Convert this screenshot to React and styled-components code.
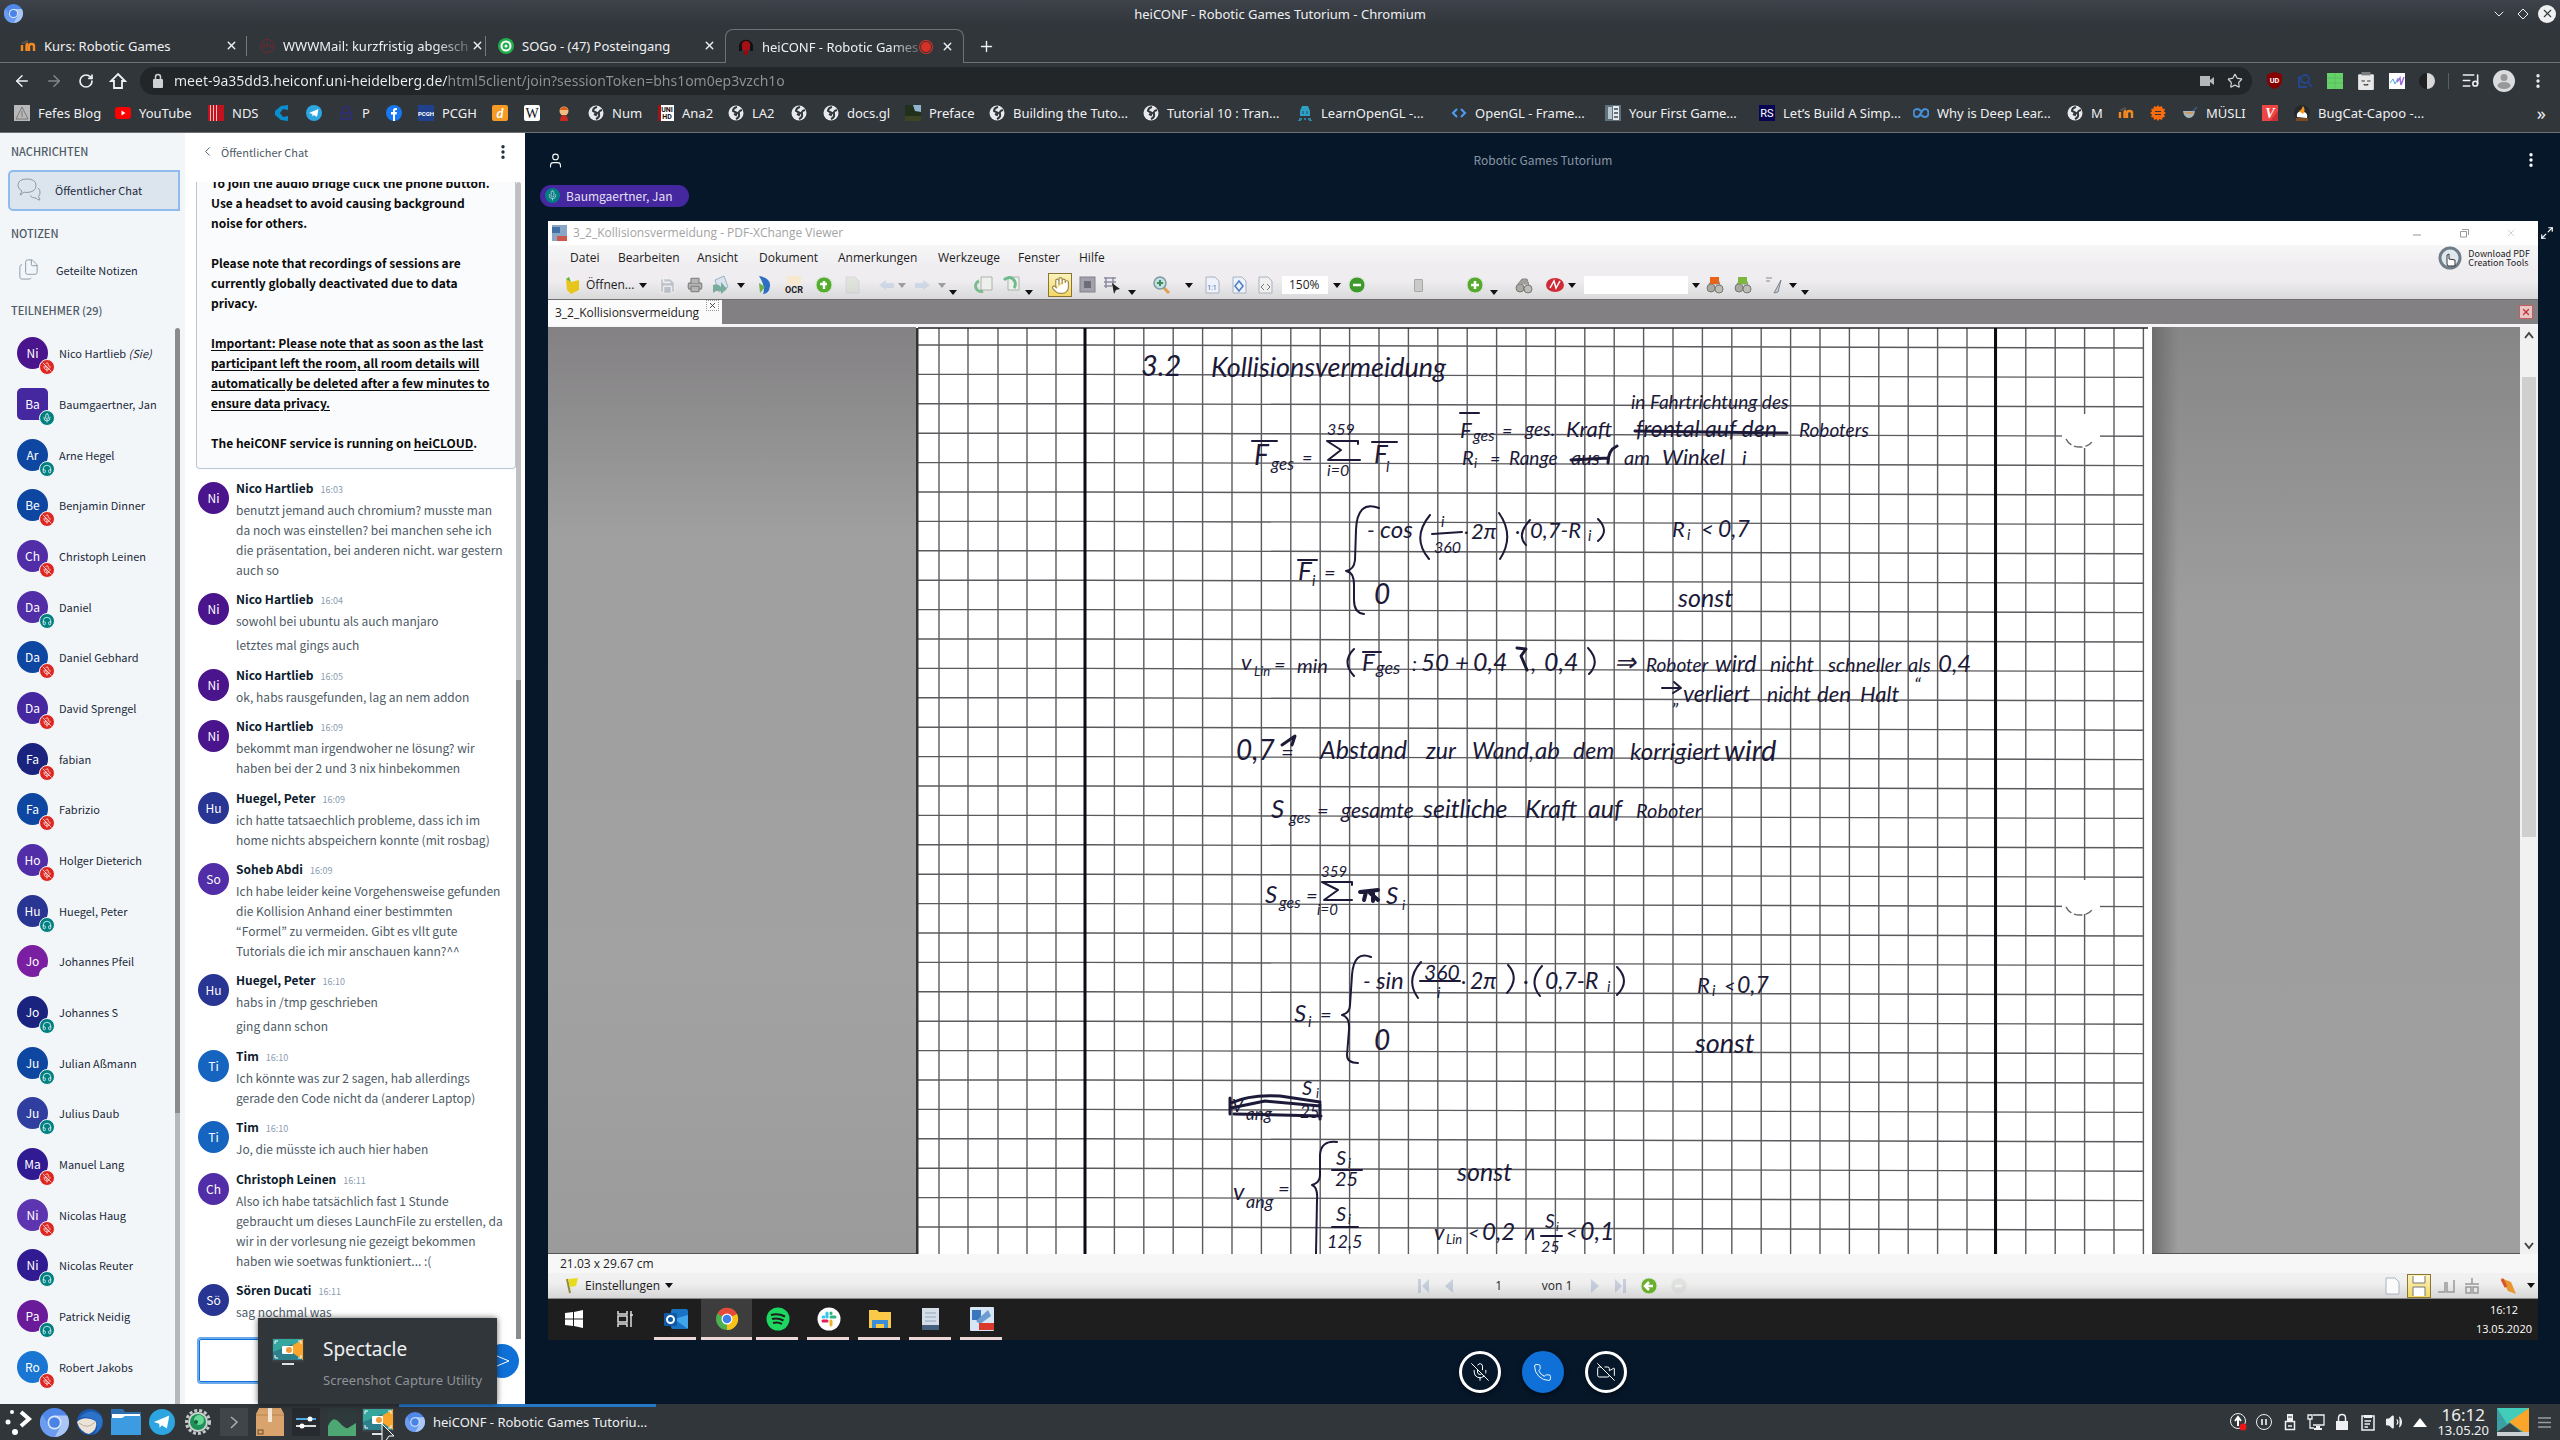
import React from "react";
import styled, { createGlobalStyle, css } from "styled-components";
import {
  ArrowLeft, ArrowRight, RotateCw, House, Lock, Video, Star, ListMusic, EllipsisVertical, ChevronLeft, ChevronDown,
  Mic, MicOff, Headphones, User, Phone, VideoOff, Maximize2, Volume2, Clipboard,
  Files, Plus, X, Hand, Save, Printer, Mail,
} from "lucide-react";

const UI = `"Noto Sans", "Open Sans", sans-serif`;
const BBB = `"Noto Sans CJK KR", "Noto Sans", sans-serif`;
const WIN = `"Open Sans", "Noto Sans", sans-serif`;

const GlobalStyle = createGlobalStyle`
  *, *::before, *::after { box-sizing: border-box; }
  body { margin: 0; background: #06172a; font-family: ${UI}; overflow: hidden; }
  h1, h2, h3, p, ul { margin: 0; padding: 0; font-weight: inherit; font-size: inherit; }
  ul { list-style: none; }
  button, input, select, textarea { font: inherit; color: inherit; }
  button { border: 0; padding: 0; background: none; cursor: pointer; }
  a { color: inherit; text-decoration: none; }
  svg { display: block; flex: none; }
`;

const Desktop = styled.div`
  display: grid;
  grid-template-rows: auto minmax(0, 1fr) auto;
  height: 100vh;
`;

/* ---------- small drawings ---------- */

const Chromium = ({ size = 20 }) => (
  <svg width={size} height={size} viewBox="0 0 20 20">
    <circle cx="10" cy="10" r="10" fill="#5088ea" />
    <path d="M10 5.200 H18.800 A10 10 0 0 1 10 20 L14.200 12.400Z" fill="#a9c6f7" />
    <path d="M1.800 4.300 A10 10 0 0 0 10 20 L14 12.800 L6 12.500Z" fill="#6b9cf0" />
    <circle cx="10" cy="10" r="4.800" fill="#dbe7fc" />
    <circle cx="10" cy="10" r="3.700" fill="#4a83e6" />
  </svg>
);

const MoodleGlyph = () => (
  <>
    <path d="M1 5 L7 2 L9 4 L3 6Z" fill="#5b5150" />
    <path d="M2 13 V7 M6.500 13 V8 Q6.500 6 8 6 M9 13 V8 Q9 6 11.500 6 T14 8 V13" fill="none" stroke="#f28a1f" strokeWidth="2.400" />
  </>
);

const FAVICONS = {
  moodle: <MoodleGlyph />,
  mail: <g fill="none" stroke="#7d2230"><circle cx="8" cy="8" r="6.500" /><path d="M5 6 V10 M8 5 V9 M11 6 V10" /></g>,
  sogo: <><circle cx="8" cy="8" r="8" fill="#1fae4a" /><circle cx="8" cy="8" r="4.500" fill="none" stroke="#fff" strokeWidth="2" /><circle cx="8" cy="8" r="1.500" fill="#fff" /></>,
  headset: <><path d="M2 8 A6 6 0 0 1 14 8" fill="none" stroke="#111" strokeWidth="2.500" /><rect x="4" y="2" width="8" height="10" rx="4" fill="#a80f14" /><rect x="1" y="7" width="3" height="5" fill="#111" /><rect x="12" y="7" width="3" height="5" fill="#111" /><rect x="6" y="12" width="4" height="4" fill="#8e0c10" /></>,
  fefe: <><rect width="16" height="16" fill="#b9b9b9" /><path d="M8 2 L14 14 H2Z M8 6 V12" fill="none" stroke="#777" /></>,
  youtube: <><rect y="2" width="16" height="12" rx="3" fill="#f00" /><path d="M6.500 5.500 L10.500 8 L6.500 10.500Z" fill="#fff" /></>,
  nds: <><rect width="16" height="16" fill="#c1121f" /><path d="M2.500 0 V16 M5.500 0 V16 M8.500 0 V16" stroke="#f2c4c6" strokeWidth="1" /></>,
  c: <path d="M14 0 L7 1 L1 6 V10 L7 15 L14 16 V11 L9 12 L6 8 L9 4 L14 5Z" fill="#0a8ed0" />,
  telegram: <><circle cx="8" cy="8" r="8" fill="#2ca5e0" /><path d="M3 8 L12.500 4 L11 12 L8 10 L6.500 11.500 L6.300 9Z" fill="#fff" /></>,
  lock: <g fill="none" stroke="#2f2f6e" strokeWidth="2"><circle cx="8" cy="5" r="3.500" /><rect x="3" y="8" width="10" height="6" /></g>,
  facebook: <><circle cx="8" cy="8" r="8" fill="#1877f2" /><path d="M7 16 V9.500 H5 V7 H7 V5.500 Q7 3 9.500 3 H11 V5 H10 Q9 5 9 6 V7 H11 L10.600 9.500 H9 V16Z" fill="#fff" /></>,
  pcgh: <><rect width="16" height="16" fill="#20428e" /><text x="8" y="11" fontSize="6" fontWeight="700" textAnchor="middle" fill="#fff" fontFamily="Roboto">PCGH</text></>,
  d: <><rect width="16" height="16" rx="2" fill="#f59a23" /><text x="8" y="13" fontSize="13" fontWeight="700" fontStyle="italic" textAnchor="middle" fill="#fff" fontFamily="Lato">d</text></>,
  w: <><rect width="16" height="16" rx="2" fill="#fff" /><text x="8" y="13" fontSize="14" textAnchor="middle" fill="#111" fontFamily="Liberation Serif">W</text></>,
  guy: <><circle cx="8" cy="6" r="4.500" fill="#f2bd83" /><path d="M3.500 5 Q8 -2 12.500 5Z" fill="#d8621b" /><path d="M4 16 Q4 10 8 10 T12 16Z" fill="#c7291e" /></>,
  globe: <><circle cx="8" cy="8" r="7.500" fill="#e8eaed" /><path d="M9 2 Q5 3 5 6 L9 8 L8 10 L6 9 M14 5 Q10 6 11 9 T8 14" fill="none" stroke="#31363b" strokeWidth="2" /></>,
  uni: <><rect width="16" height="16" fill="#fff" /><rect width="3" height="16" fill="#9a1518" /><text x="9" y="7" fontSize="7" fontWeight="700" textAnchor="middle" fill="#111" fontFamily="Roboto">UNI</text><text x="9" y="14" fontSize="7" fontWeight="700" textAnchor="middle" fill="#111" fontFamily="Roboto">HD</text></>,
  photo: <><rect width="16" height="16" fill="#20301b" /><path d="M8 0 H16 V7 L10 6Z" fill="#8fb4cf" /><rect y="11" width="16" height="5" fill="#3c4425" /></>,
  learn: <><path d="M5 1 H11 L13 6 V11 H3 V6Z" fill="#2f9fc4" /><path d="M2 14 H5 M7 14 H9 M11 14 H14 M1 16 H4 M12 16 H15" stroke="#2f9fc4" strokeWidth="1.500" /><path d="M6 6 V9 M10 6 V9" stroke="#1c5266" /></>,
  code: <path d="M6 4 L2 8 L6 12 M10 4 L14 8 L10 12" fill="none" stroke="#4d9ef5" strokeWidth="2" />,
  doc: <><rect width="16" height="16" fill="#5f717c" /><rect x="3" y="2" width="4" height="12" fill="#b7c5cd" /><rect x="8" y="1" width="6" height="14" fill="#e4eaed" /><path d="M9 4 H13 M9 8 H13 M9 12 H13" stroke="#445" strokeWidth="1.500" /></>,
  rs: <><rect width="16" height="16" fill="#050552" /><text x="8" y="12" fontSize="11" textAnchor="middle" fill="#fff" fontFamily="Roboto">RS</text></>,
  infinity: <path d="M8 6 Q6 4 4 4 A3.500 4 0 0 0 4 12 Q6 12 8 8 Q10 4 12 4 A3.500 4 0 0 1 12 12 Q10 12 8 10" fill="none" stroke="#4590d9" strokeWidth="2.200" />,
  gear: <path d="M8 0 L9.500 2 L12 1 L12.500 3.500 L15 4 L14 6.500 L16 8 L14 9.500 L15 12 L12.500 12.500 L12 15 L9.500 14 L8 16 L6.500 14 L4 15 L3.500 12.500 L1 12 L2 9.500 L0 8 L2 6.500 L1 4 L3.500 3.500 L4 1 L6.500 2Z M5 6 H11 V7 H5Z M5 9 H11 V10 H5Z" fill="#f96b0c" fillRule="evenodd" />,
  cup: <><path d="M1 6 H13 Q12 13 7 13 T1 6Z" fill="#a9b4bb" /><path d="M3 7 H11 V9 H4Z" fill="#c99a5b" /><path d="M11 6 L15 2" stroke="#3d5d88" strokeWidth="1.500" /></>,
  v: <><rect width="16" height="16" fill="#ef4444" /><path d="M8 16 L16 6 V16Z" fill="#c93036" /><text x="8" y="13" fontSize="14" fontWeight="700" fontStyle="italic" textAnchor="middle" fill="#fff" fontFamily="Liberation Serif">V</text></>,
  cat: <><circle cx="8" cy="8" r="8" fill="#26292b" /><path d="M3 12 Q2 7 7 6 L9 2 Q11 4 10 7 Q14 8 13 13Z" fill="#fff" /><path d="M5 6 Q8 5 9 1 Q12 5 9 9Z" fill="#f8961e" /><rect x="2" y="13" width="12" height="3" fill="#7a4a1d" /></>,
};

const Fav = ({ kind, size = 16 }) => <svg width={size} height={size} viewBox="0 0 16 16">{FAVICONS[kind]}</svg>;

/* ---------- browser chrome ---------- */

const Browser = styled.header`
  background: linear-gradient(#3e434b, #31363b 26px);
  color: #eff0f1;
  font-size: 13px;
  line-height: 18px;
  border-bottom: 1px solid #6e7276;
  padding-bottom: 4px;
`;
const TitleBar = styled.div`
  display: grid;
  grid-template-columns: 1fr auto 1fr;
  align-items: center;
  height: 29px;
  padding: 0 4px 2px;
`;
const WindowButtons = styled.div`
  display: flex;
  justify-content: flex-end;
  align-items: center;
  gap: 6px;
`;
const PlainButton = styled.button`
  display: flex;
  align-items: center;
  justify-content: center;
  flex: none;
  width: ${(p) => p.$w || 18}px;
  height: ${(p) => p.$h || 18}px;
  color: ${(p) => p.$c || "inherit"};
  border-radius: ${(p) => (p.$round ? "50%" : "0")};
  background: ${(p) => p.$bg || "none"};
`;
const TabStrip = styled.nav`
  display: flex;
  align-items: flex-end;
  height: 34px;
  padding-left: 8px;
  border-bottom: 1px solid #6e7276;
`;
const Tab = styled.div`
  display: flex;
  align-items: center;
  gap: 8px;
  width: 239px;
  height: 33px;
  padding: 0 7px 0 12px;
  position: relative;
  ${(p) => p.$active ? css`
    height: 34px;
    margin-bottom: -1px;
    background: #31363b;
    border: 1px solid #6e7276;
    border-bottom: 0;
    border-radius: 8px 8px 0 0;
  ` : css`
    &::after { content: ""; position: absolute; right: 0; top: 7px; width: ${p.$last ? 0 : 1}px; height: 20px; background: #777b7f; }
  `}
`;
const TabTitle = styled.a`
  flex: 1;
  margin-right: -8px;
  white-space: nowrap;
  ${(p) => p.$fade && css`mask-image: linear-gradient(90deg, #000 82%, #0004);`}
`;
const RecordDot = styled.span`
  width: 12px;
  height: 12px;
  margin: 0 -2px 0 2px;
  border-radius: 50%;
  border: 1px solid #31363b;
  outline: 1px solid #d93025;
  background: #d93025;
`;
const NavBar = styled.div`
  display: flex;
  align-items: center;
  height: 35px;
  padding: 0 13px 0 12px;
`;
const NavButtons = styled.div`
  display: flex;
  gap: 12px;
  width: 128px;
`;
const Omnibox = styled.form`
  display: flex;
  align-items: center;
  gap: 8px;
  flex: 1;
  height: 28px;
  padding: 0 9px 0 10px;
  border-radius: 14px;
  background: #232629;
`;
const UrlInput = styled.input`
  flex: 1;
  border: 0;
  outline: 0;
  padding: 0;
  font-size: 14px;
  height: 22px;
  color: #eff0f1;
  -webkit-text-fill-color: transparent;
  background: linear-gradient(90deg, #eff0f1 273px, #8f9396 273px);
  background-clip: text;
`;
const Extensions = styled.div`
  display: flex;
  align-items: center;
  gap: 14px;
  padding-left: 14px;
`;
const BarDivider = styled.span`
  width: 1px;
  height: 16px;
  margin: 0 -2px 0 -1px;
  background: #5a5f64;
`;
const BookmarkBar = styled.nav`
  display: flex;
  align-items: center;
  gap: 16px;
  height: 30px;
  padding: 0 14px;
`;
const Bookmark = styled.a`
  display: flex;
  align-items: center;
  gap: 8px;
  flex: none;
  white-space: nowrap;
`;
const BookmarkLabel = styled.span`
  width: ${(p) => p.$w}px;
`;
const Overflow = styled.span`
  margin-left: auto;
  font-size: 18px;
`;

const BOOKMARKS = [
  ["fefe", "Fefes Blog", 61], ["youtube", "YouTube", 53], ["nds", "NDS", 26], ["c"], ["telegram"], ["lock", "P", 8],
  ["facebook"], ["pcgh", "PCGH", 34], ["d"], ["w"], ["guy"], ["globe", "Num", 30], ["uni", "Ana2", 30], ["globe", "LA2", 23],
  ["globe"], ["globe", "docs.gl", 42], ["photo", "Preface", 44], ["globe", "Building the Tuto...", 114],
  ["globe", "Tutorial 10 : Tran...", 114], ["learn", "LearnOpenGL -...", 114], ["code", "OpenGL - Frame...", 114],
  ["doc", "Your First Game...", 114], ["rs", "Let’s Build A Simp...", 114], ["infinity", "Why is Deep Lear...", 114],
  ["globe", "M", 11], ["moodle"], ["gear"], ["cup", "MÜSLI", 40], ["v"], ["cat", "BugCat-Capoo -...", 114],
];

const TABS = [
  { icon: "moodle", title: "Kurs: Robotic Games" },
  { icon: "mail", title: "WWWMail: kurzfristig abgesch", fade: true },
  { icon: "sogo", title: "SOGo - (47) Posteingang", last: true },
  { icon: "headset", title: "heiCONF - Robotic Games", active: true, fade: true },
];

const ExtIcon = ({ children, size = 16 }) => <svg width={size} height={size} viewBox="0 0 16 16">{children}</svg>;

function BrowserChrome() {
  return (
    <Browser>
      <TitleBar>
        <Chromium size={19} />
        <h1>heiCONF - Robotic Games Tutorium - Chromium</h1>
        <WindowButtons>
          <PlainButton aria-label="Minimieren"><ChevronDown size={16} strokeWidth={1.500} /></PlainButton>
          <PlainButton aria-label="Maximieren">
            <svg width="14" height="14" viewBox="0 0 14 14"><path d="M7 2 L12 7 L7 12 L2 7Z" fill="none" stroke="#eff0f1" /></svg>
          </PlainButton>
          <PlainButton aria-label="Schließen" $round $bg="#eff0f1" $c="#31363b"><X size={13} strokeWidth={2} /></PlainButton>
        </WindowButtons>
      </TitleBar>
      <TabStrip>
        {TABS.map((t) => (
          <Tab key={t.title} $active={t.active} $last={t.last}>
            <Fav kind={t.icon} />
            <TabTitle href="#" $fade={t.fade}>{t.title}</TabTitle>
            {t.active && <RecordDot />}
            <PlainButton aria-label="Tab schließen"><X size={13} strokeWidth={2.500} /></PlainButton>
          </Tab>
        ))}
        <PlainButton aria-label="Neuer Tab" $w={44} $h={32}><Plus size={17} /></PlainButton>
      </TabStrip>
      <NavBar>
        <NavButtons>
          <PlainButton aria-label="Zurück" $w={20}><ArrowLeft size={18} /></PlainButton>
          <PlainButton aria-label="Vorwärts" $w={20} $c="#83878a"><ArrowRight size={18} /></PlainButton>
          <PlainButton aria-label="Neu laden" $w={20}><RotateCw size={16} strokeWidth={2.500} /></PlainButton>
          <PlainButton aria-label="Startseite" $w={20}>
            <svg width="18" height="18" viewBox="0 0 18 18"><path d="M9 2 L16 9 H13 V16 H5 V9 H2Z" fill="none" stroke="#eff0f1" strokeWidth="1.800" /></svg>
          </PlainButton>
        </NavButtons>
        <Omnibox onSubmit={(e) => e.preventDefault()}>
          <svg width="16" height="16" viewBox="0 0 16 16"><rect x="3" y="6" width="10" height="9" rx="1" fill="#cfd1d3" /><path d="M5.500 6 V4 Q5.500 1.500 8 1.500 T10.500 4 V6" fill="none" stroke="#cfd1d3" strokeWidth="1.500" /></svg>
          <UrlInput aria-label="Adresse" defaultValue="meet-9a35dd3.heiconf.uni-heidelberg.de/html5client/join?sessionToken=bhs1om0ep3vzch1o" />
          <PlainButton type="button" aria-label="Kamera" $w={24} $c="#b5b7b9">
            <svg width="14" height="10" viewBox="0 0 14 10"><path d="M0 0 H10 V4 L14 1 V9 L10 6 V10 H0Z" fill="#b5b7b9" /></svg>
          </PlainButton>
          <PlainButton type="button" aria-label="Lesezeichen" $w={16} $c="#d0d2d4"><Star size={16} strokeWidth={1.800} /></PlainButton>
        </Omnibox>
        <Extensions>
          <ExtIcon size={17}><path d="M8 0 L15 2 V9 Q14 14 8 16 Q2 14 1 9 V2Z" fill="#870000" /><text x="8" y="10" fontSize="7" fontWeight="700" textAnchor="middle" fill="#fff" fontFamily="Roboto">UD</text></ExtIcon>
          <ExtIcon><g fill="none" stroke="#24478f" strokeWidth="1.800"><circle cx="8" cy="6" r="4" /><path d="M11 9 L15 14 M2 3 V14 H10" /></g></ExtIcon>
          <ExtIcon><rect width="16" height="16" fill="#66d069" /><path d="M0 5 H16 M0 10 H16 M8 0 V16" stroke="#58c05c" /></ExtIcon>
          <ExtIcon size={18}><rect x="1" y="2" width="14" height="14" rx="1" fill="#e8e8e8" /><rect x="4" y="0" width="8" height="3" fill="#7a7d80" /><path d="M4 8 H7 M9 8 H12 M6 11 Q8 12 10 11" stroke="#333" fill="none" /></ExtIcon>
          <ExtIcon><rect width="16" height="16" fill="#fff" /><path d="M1 10 L4 6 L6 11 L9 5" stroke="#4da3e6" fill="none" /><path d="M8 9 L11 5 L12 12 L15 4" stroke="#a06be0" fill="none" strokeWidth="1.500" /></ExtIcon>
          <ExtIcon><circle cx="8" cy="8" r="8" fill="#1f2123" /><path d="M8 0 A8 8 0 0 1 8 16Z" fill="#d8d8d8" /></ExtIcon>
          <BarDivider />
          <PlainButton aria-label="Medien"><ListMusic size={19} /></PlainButton>
          <PlainButton aria-label="Profil" $w={22} $h={22} $round $bg="#dadcdd" $c="#8b8e91">
            <svg width="16" height="18" viewBox="0 0 16 18"><circle cx="8" cy="5.500" r="3.500" fill="#97999b" /><ellipse cx="8" cy="13.500" rx="6.500" ry="3.500" fill="#97999b" /></svg>
          </PlainButton>
          <PlainButton aria-label="Menü"><EllipsisVertical size={18} strokeWidth={2.500} /></PlainButton>
        </Extensions>
      </NavBar>
      <BookmarkBar>
        {BOOKMARKS.map(([icon, label, w], i) => (
          <Bookmark key={i} href="#" aria-label={label || icon}>
            <Fav kind={icon} />
            {label && <BookmarkLabel $w={w}>{label}</BookmarkLabel>}
          </Bookmark>
        ))}
        <Overflow>»</Overflow>
      </BookmarkBar>
    </Browser>
  );
}

/* ---------- conference: participants ---------- */

const Conference = styled.main`
  display: grid;
  grid-template-columns: 185px 340px minmax(0, 1fr);
  min-height: 0;
  font-family: ${BBB};
`;
const UserPanel = styled.aside`
  display: flex;
  flex-direction: column;
  min-height: 0;
  background: #f3f6f9;
  color: #1b2a3a;
  font-size: 11px;
  line-height: 16px;
`;
const PanelHeading = styled.h2`
  padding: 0 11px;
  margin-top: ${(p) => p.$top}px;
  font-weight: 500;
  color: #4e5a66;
`;
const PanelItem = styled.button`
  display: flex;
  align-items: center;
  gap: ${(p) => (p.$active ? 14 : 16)}px;
  height: 41px;
  flex: none;
  margin: ${(p) => (p.$active ? "11px 5px 0 8px" : "9px 5px 0 8px")};
  padding: 0 7px 2px;
  border: 2px solid ${(p) => (p.$active ? "#8fbbee" : "transparent")};
  border-radius: 5px 0 0 5px;
  background: ${(p) => (p.$active ? "#dce4ed" : "none")};
`;
const PeopleArea = styled.div`
  display: flex;
  flex: 1;
  min-height: 0;
  margin: 10px 5px 0 0;
`;
const People = styled.ul`
  display: flex;
  flex-direction: column;
  flex: 1;
  padding: 0 0 12px 17px;
`;
const Person = styled.li`
  display: flex;
  align-items: center;
  gap: 11px;
  flex: 1 1 0;
  white-space: nowrap;
`;
const AvatarBox = styled.span`
  position: relative;
  display: grid;
  place-items: center;
  flex: none;
  width: 31px;
  height: 32px;
  border-radius: ${(p) => (p.$square ? "5px" : "50%")};
  background: ${(p) => p.$c};
  color: #fff;
  font-size: 12px;
  line-height: 16px;
`;
const Badge = styled.span`
  position: absolute;
  right: -7px;
  bottom: -6px;
  display: grid;
  place-items: center;
  width: 16px;
  height: 16px;
  border-radius: 50%;
  border: 1px solid #f3f6f9;
  background: ${(p) => (p.$muted ? "#df2721" : p.$none ? "#f3f6f9" : "#008081")};
  color: #fff;
`;
const Scroll = styled.span`
  width: 5px;
  flex: none;
  border-radius: 3px 3px 0 0;
  background: ${(p) => p.$bg};
`;

const PEOPLE = [
  ["Ni", "Nico Hartlieb", "#4a148c", "muted", true], ["Ba", "Baumgaertner, Jan", "#4527a0", "mic"], ["Ar", "Arne Hegel", "#0d47a1", "listen"],
  ["Be", "Benjamin Dinner", "#0d47a1", "muted"], ["Ch", "Christoph Leinen", "#512da8", "muted"], ["Da", "Daniel", "#512da8", "listen"],
  ["Da", "Daniel Gebhard", "#0d47a1", "muted"], ["Da", "David Sprengel", "#4527a0", "muted"], ["Fa", "fabian", "#1a237e", "muted"],
  ["Fa", "Fabrizio", "#0d47a1", "muted"], ["Ho", "Holger Dieterich", "#512da8", "muted"], ["Hu", "Huegel, Peter", "#283593", "listen"],
  ["Jo", "Johannes Pfeil", "#7b1fa2", "none"], ["Jo", "Johannes S", "#1a237e", "listen"], ["Ju", "Julian Aßmann", "#0d47a1", "listen"],
  ["Ju", "Julius Daub", "#303f9f", "listen"], ["Ma", "Manuel Lang", "#311b92", "muted"], ["Ni", "Nicolas Haug", "#5e35b1", "muted"],
  ["Ni", "Nicolas Reuter", "#311b92", "listen"], ["Pa", "Patrick Neidig", "#6a1b9a", "listen"], ["Ro", "Robert Jakobs", "#1976d2", "muted"],
];

const BADGE_ICON = { muted: MicOff, mic: Mic, listen: Headphones };

function Avatar({ initials, color, state }) {
  const Icon = BADGE_ICON[state];
  return (
    <AvatarBox $c={color} $square={state === "mic"}>
      {initials}
      {state && <Badge $muted={state === "muted"} $none={state === "none"}>{Icon && <Icon size={10} strokeWidth={1.800} />}</Badge>}
    </AvatarBox>
  );
}

function Participants() {
  return (
    <UserPanel>
      <PanelHeading $top={10}>NACHRICHTEN</PanelHeading>
      <PanelItem $active>
        <svg width="24" height="24" viewBox="0 0 24 24" fill="none" stroke="#8b9aa8"><path d="M3 17 L5 13 Q1 11 1 7.500 Q1 1 10 1 T19 7.500 T10 14.500 Q8 14.500 7 14 Q5 16.500 3 17Z" /><path d="M21 10 Q23.500 12 23 15 Q23 17 21.500 18.500 L23 22 Q20 22 19 20 Q15 20.500 13 17.500" /></svg>
        Öffentlicher Chat
      </PanelItem>
      <PanelHeading $top={14}>NOTIZEN</PanelHeading>
      <PanelItem><Files size={23} strokeWidth={1} color="#8b9aa8" />Geteilte Notizen</PanelItem>
      <PanelHeading $top={11}>TEILNEHMER (29)</PanelHeading>
      <PeopleArea>
        <People>
          {PEOPLE.map(([ini, name, color, state, me]) => (
            <Person key={name}>
              <Avatar initials={ini} color={color} state={state} />
              <span>{name}{me && <i> (Sie)</i>}</span>
            </Person>
          ))}
        </People>
        <Scroll $bg="linear-gradient(#8b8b8b 73%, #b5b8bb 73%)" />
      </PeopleArea>
    </UserPanel>
  );
}

/* ---------- conference: chat ---------- */

const ChatPanel = styled.section`
  display: flex;
  flex-direction: column;
  min-height: 0;
  background: #fff;
  color: #4e5a66;
  font-size: 12px;
  line-height: 20px;
`;
const ChatHeader = styled.div`
  display: flex;
  align-items: center;
  height: 49px;
  flex: none;
  padding: 0 13px 12px 15px;
  font-size: 11px;
  justify-content: space-between;
`;
const BackButton = styled.button`
  display: flex;
  align-items: center;
  gap: 6px;
`;
const ChatScroll = styled.div`
  display: flex;
  flex: 1;
  min-height: 0;
  margin: 0 4px 0 11px;
`;
const ChatLog = styled.div`
  display: flex;
  flex-direction: column;
  flex: 1;
  min-width: 0;
`;
const Welcome = styled.div`
  display: flex;
  flex-direction: column;
  justify-content: flex-end;
  gap: 20px;
  height: 287px;
  flex: none;
  padding: 0 0 15px 14px;
  overflow: hidden;
  border: 1px solid #b9c6d3;
  border-top: 0;
  border-radius: 0 0 4px 4px;
  background: #f9fbfc;
  color: #0a0a0a;
  font-weight: 700;
  white-space: pre;
`;
const Under = styled.u`
  text-underline-offset: 2px;
`;
const Messages = styled.ul`
  display: flex;
  flex-direction: column;
  justify-content: space-between;
  flex: 1;
  padding: 9px 0 17px 2px;
`;
const Message = styled.li`
  display: flex;
  align-items: flex-start;
  gap: 7px;
  white-space: pre;
`;
const MessageAvatar = styled.div`
  padding-top: 4px;
`;
const MessageBody = styled.div`
  display: flex;
  flex-direction: column;
`;
const Author = styled.h3`
  color: #0b1b2d;
  font-weight: 700;
  time { margin-left: 7px; color: #8b9db0; font-size: 9px; font-weight: 400; }
`;
const Paragraph = styled.p`
  & + & { margin-top: 4px; }
`;
const Composer = styled.form`
  display: flex;
  gap: 2px;
  align-items: center;
  height: 65px;
  flex: none;
  padding: 0 6px 22px 14px;
`;
const ChatInput = styled.textarea`
  flex: 1;
  height: 43px;
  resize: none;
  border: 1px solid #0f70d7;
  border-radius: 2px;
  outline: 2px solid #69a9ec;
  outline-offset: 0;
`;

const MESSAGES = [
  ["Ni", "Nico Hartlieb", "#4a148c", "16:03", ["benutzt jemand auch chromium? musste man\nda noch was einstellen? bei manchen sehe ich\ndie präsentation, bei anderen nicht. war gestern\nauch so"]],
  ["Ni", "Nico Hartlieb", "#4a148c", "16:04", ["sowohl bei ubuntu als auch manjaro", "letztes mal gings auch"]],
  ["Ni", "Nico Hartlieb", "#4a148c", "16:05", ["ok, habs rausgefunden, lag an nem addon"]],
  ["Ni", "Nico Hartlieb", "#4a148c", "16:09", ["bekommt man irgendwoher ne lösung? wir\nhaben bei der 2 und 3 nix hinbekommen"]],
  ["Hu", "Huegel, Peter", "#283593", "16:09", ["ich hatte tatsaechlich probleme, dass ich im\nhome nichts abspeichern konnte (mit rosbag)"]],
  ["So", "Soheb Abdi", "#512da8", "16:09", ["Ich habe leider keine Vorgehensweise gefunden\ndie Kollision Anhand einer bestimmten\n“Formel” zu vermeiden. Gibt es vllt gute\nTutorials die ich mir anschauen kann?^^"]],
  ["Hu", "Huegel, Peter", "#283593", "16:10", ["habs in /tmp geschrieben", "ging dann schon"]],
  ["Ti", "Tim", "#1565c0", "16:10", ["Ich könnte was zur 2 sagen, hab allerdings\ngerade den Code nicht da (anderer Laptop)"]],
  ["Ti", "Tim", "#1565c0", "16:10", ["Jo, die müsste ich auch hier haben"]],
  ["Ch", "Christoph Leinen", "#512da8", "16:11", ["Also ich habe tatsächlich fast 1 Stunde\ngebraucht um dieses LaunchFile zu erstellen, da\nwir in der vorlesung nie gezeigt bekommen\nhaben wie soetwas funktioniert... :("]],
  ["Sö", "Sören Ducati", "#283593", "16:11", ["sag nochmal was"]],
];

function Chat() {
  return (
    <ChatPanel>
      <ChatHeader>
        <BackButton><ChevronLeft size={15} strokeWidth={1.500} />Öffentlicher Chat</BackButton>
        <PlainButton aria-label="Optionen" $c="#1b2a3a"><EllipsisVertical size={18} strokeWidth={2.500} /></PlainButton>
      </ChatHeader>
      <ChatScroll>
        <ChatLog>
          <Welcome>
            <p>{"To join the audio bridge click the phone button.\nUse a headset to avoid causing background\nnoise for others."}</p>
            <p>{"Please note that recordings of sessions are\ncurrently globally deactivated due to data\nprivacy."}</p>
            <p><Under>{"Important: Please note that as soon as the last\nparticipant left the room, all room details will\nautomatically be deleted after a few minutes to\nensure data privacy."}</Under></p>
            <p>The heiCONF service is running on <a href="#"><Under>heiCLOUD</Under></a>.</p>
          </Welcome>
          <Messages>
            {MESSAGES.map(([ini, name, color, time, paras], i) => (
              <Message key={i}>
                <MessageAvatar><Avatar initials={ini} color={color} /></MessageAvatar>
                <MessageBody>
                  <Author>{name}<time>{time}</time></Author>
                  {paras.map((p) => <Paragraph key={p}>{p}</Paragraph>)}
                </MessageBody>
              </Message>
            ))}
          </Messages>
        </ChatLog>
        <Scroll $bg="linear-gradient(#c0c0c0 43%, #8b8b8b 43%)" />
      </ChatScroll>
      <Composer onSubmit={(e) => e.preventDefault()}>
        <ChatInput aria-label="Nachricht" />
        <PlainButton aria-label="Senden" $w={34} $h={34} $round $bg="#0f70d7" $c="#fff">
          <svg width="18" height="18" viewBox="0 0 18 18"><path d="M4 4 L16 9 L4 14" fill="none" stroke="#fff" /></svg>
        </PlainButton>
      </Composer>
    </ChatPanel>
  );
}

/* ---------- conference: screen share ---------- */

const Stage = styled.section`
  display: flex;
  flex-direction: column;
  min-width: 0;
  min-height: 0;
  background: #06172a;
  color: #fff;
`;
const StageTop = styled.div`
  display: grid;
  grid-template-columns: 1fr auto 1fr;
  align-items: center;
  height: 52px;
  flex: none;
  padding: 2px 20px 0 21px;
`;
const StageTitle = styled.h2`
  color: #8795a4;
  font-size: 12px;
  line-height: 18px;
`;
const EndButton = styled(PlainButton)`
  justify-self: end;
`;
const Talking = styled.button`
  display: flex;
  align-items: center;
  align-self: flex-start;
  gap: 6px;
  height: 22px;
  flex: none;
  margin: 0 15px 14px;
  padding: 0 16px 2px 5px;
  border-radius: 11px;
  background: #4527a0;
  color: #e4e0f2;
  font-size: 12px;
`;
const TalkMic = styled.span`
  display: grid;
  place-items: center;
  width: 15px;
  height: 15px;
  border-radius: 50%;
  background: #008081;
`;
const ShareRow = styled.div`
  position: relative;
  display: flex;
  flex: 1;
  min-height: 0;
  padding: 0 22px 0 23px;
`;
const FullscreenButton = styled(PlainButton)`
  position: absolute;
  right: 4px;
  top: 3px;
`;
const Actions = styled.div`
  display: flex;
  justify-content: center;
  align-items: center;
  gap: 21px;
  height: 64px;
  flex: none;
`;
const Round = styled.button`
  display: grid;
  place-items: center;
  width: 42px;
  height: 42px;
  border-radius: 50%;
  border: 3px solid ${(p) => (p.$on ? "#0f70d7" : "#fff")};
  background: ${(p) => (p.$on ? "#0f70d7" : "#06172a")};
  color: #fff;
  box-shadow: 0 2px 5px #0008;
`;

/* ---------- shared PDF viewer window ---------- */

const Share = styled.div`
  display: flex;
  flex-direction: column;
  flex: 1;
  min-width: 0;
  background: #f0eff1;
  color: #1d1d1d;
  font-family: ${WIN};
  font-size: 12px;
  line-height: 16px;
`;
const PdfTitle = styled.div`
  display: flex;
  align-items: center;
  gap: 5px;
  height: 24px;
  flex: none;
  padding: 0 18px 0 4px;
  background: #fff;
  color: #a3a3a3;
`;
const PdfTitleButtons = styled.div`
  display: flex;
  gap: 29px;
  margin-left: auto;
`;
const PdfTop = styled.div`
  display: grid;
  grid-template-columns: 1fr auto;
  background: linear-gradient(#f7f7f7, #efedf0 40%, #efedf0 65%, #d9d9da);
  border-bottom: 1px solid #6f6f6f;
  height: 55px;
  flex: none;
`;
const PdfMenu = styled.nav`
  display: flex;
  align-items: center;
  height: 26px;
  padding-left: 22px;
`;
const MenuButton = styled.button`
  width: ${(p) => p.$w}px;
  text-align: left;
  white-space: nowrap;
`;
const PdfTools = styled.div`
  display: flex;
  align-items: center;
  height: 28px;
`;
const Tool = styled.button`
  display: grid;
  place-items: center;
  flex: none;
  width: ${(p) => p.$w || 20}px;
  height: 24px;
  margin-left: ${(p) => p.$gap || 0}px;
  padding-top: ${(p) => (p.$low ? 14 : 0)}px;
  opacity: ${(p) => (p.$dim ? 0.35 : 1)};
  border: ${(p) => (p.$on ? "1px solid #8c7434" : "0")};
  background: ${(p) => (p.$on ? "linear-gradient(#fbf3bd, #f2d865)" : "none")};
`;
const OpenLabel = styled.button`
  width: 48px;
  margin-left: 4px;
  text-align: left;
  white-space: nowrap;
`;
const ZoomSelect = styled.select`
  appearance: none;
  width: 46px;
  height: 18px;
  margin-left: 7px;
  padding: 0 7px;
  border: 0;
  background: #fff;
`;
const ZoomRange = styled.input`
  appearance: none;
  width: 90px;
  height: 18px;
  margin: 0 2px 0 6px;
  background: none;
  &::-webkit-slider-thumb { appearance: none; width: 9px; height: 13px; background: #c9cbc9; border: 1px solid #a5a8a5; border-radius: 1px; }
`;
const FindInput = styled.input`
  width: 104px;
  height: 18px;
  margin-left: 7px;
  border: 0;
  background: #fff;
`;
const Download = styled.a`
  display: flex;
  align-items: center;
  gap: 6px;
  align-self: start;
  margin: 0 8px 0 0;
  font-family: ${BBB};
  font-size: 9px;
  line-height: 9px;
  height: 26px;
`;
const DocTabs = styled.div`
  display: flex;
  align-items: stretch;
  height: 27px;
  flex: none;
  background: #828082;
  border-bottom: 3px solid #f4f4f4;
`;
const DocTab = styled.div`
  display: flex;
  align-items: flex-start;
  gap: 6px;
  height: 26px;
  width: 174px;
  padding: 0 3px 0 7px;
  background: #fbfbfb;
  a { line-height: 26px; flex: 1; }
`;
const TabClose = styled.button`
  width: 13px;
  height: 11px;
  border: 1px dotted #999;
  display: grid;
  place-items: center;
  line-height: 9px;
`;
const RedClose = styled(PlainButton)`
  margin: 5px 5px 0 auto;
  border: 1px solid #c75d5d;
  background: #e9c4c4;
`;
const Viewport = styled.div`
  display: flex;
  flex: 1;
  min-height: 0;
`;
const Margin = styled.div`
  flex: 1;
  background: ${(p) => (p.$right
    ? "linear-gradient(90deg, #6d6d6d, #8a8a8a00 26px), linear-gradient(#868686, #9d9d9d 30%, #9f9f9f)"
    : "linear-gradient(#838183, #9f9f9f 22%, #a2a2a2 70%, #9b9b9b)")};
  border-bottom: 1px solid #555;
`;
const Page = styled.div`
  width: 1236px;
  flex: none;
  background: #fff;
  overflow: hidden;
`;
const VScroll = styled.div`
  display: flex;
  flex-direction: column;
  align-items: center;
  width: 18px;
  padding: 4px 2px;
  background: #f1f1f1;
  color: #555;
`;
const VThumb = styled.span`
  width: 14px;
  height: 460px;
  margin-top: 38px;
  background: #cfcfcf;
`;
const VEnd = styled.span`
  margin-top: auto;
`;
const Status = styled.div`
  display: flex;
  align-items: center;
  height: 19px;
  flex: none;
  padding-left: 12px;
  background: #f7f7f7;
`;
const PdfNav = styled.div`
  display: grid;
  grid-template-columns: 1fr auto 1fr;
  align-items: center;
  height: 26px;
  flex: none;
  background: linear-gradient(#f1f1f2, #efeff0 40%, #d6d6d7);
  border-bottom: 1px solid #8a8a8a;
`;
const NavGroup = styled.div`
  display: flex;
  align-items: center;
  justify-content: ${(p) => p.$end ? "flex-end" : "flex-start"};
  gap: ${(p) => p.$gap || 6}px;
  padding: 0 ${(p) => (p.$end ? 3 : 0)}px 0 ${(p) => (p.$end ? 0 : 18)}px;
`;
const PageInput = styled.input`
  width: 62px;
  border: 0;
  text-align: center;
  background: none;
  padding: 0;
`;
const WinBar = styled.div`
  display: flex;
  align-items: stretch;
  height: 41px;
  flex: none;
  background: #1f1e1e;
  color: #fff;
`;
const WinApp = styled.button`
  position: relative;
  display: grid;
  place-items: center;
  width: 51px;
  padding-bottom: 1px;
  background: ${(p) => (p.$on ? "#3d3d3d" : "none")};
  &::after {
    content: "";
    position: absolute;
    left: ${(p) => (p.$on ? 0 : 4)}px;
    right: ${(p) => (p.$on ? 0 : 5)}px;
    bottom: 0;
    height: ${(p) => (p.$run ? 3 : 0)}px;
    background: #ecd6d6;
  }
`;
const WinClock = styled.div`
  display: flex;
  flex-direction: column;
  align-items: center;
  gap: 3px;
  margin-left: auto;
  padding: 3px 6px 0 0;
  font-size: 11px;
  line-height: 16px;
`;

const Caret = () => <svg width="8" height="5" viewBox="0 0 8 5"><path d="M0 0 H8 L4 5Z" fill="#111" /></svg>;
const Ball = ({ c, d }) => (
  <svg width="18" height="18" viewBox="0 0 18 18"><circle cx="9" cy="9" r="8" fill={c} stroke="#d6e3cf" /><path d={d} stroke="#fff" strokeWidth="2.500" fill="none" /></svg>
);
const Sheet = ({ children, tint = "#eef2fa" }) => (
  <svg width="17" height="18" viewBox="0 0 17 18"><path d="M2 1 H11 L15 5 V17 H2Z" fill={tint} stroke="#a8b2c0" />{children}</svg>
);
const Sheets = ({ d, c }) => (
  <svg width="20" height="20" viewBox="0 0 20 20"><path d="M7 2 H18 V15 H7Z" fill="#eef0ec" stroke="#aab2aa" /><path d={d} fill="none" stroke={c} strokeWidth="3" /></svg>
);
const Binoculars = ({ c }) => (
  <svg width="20" height="20" viewBox="0 0 20 20"><circle cx="6" cy="13" r="4" fill="#a9a9a2" stroke="#777" /><circle cx="14" cy="14" r="4" fill="#bdbdb5" stroke="#777" /><path d="M4 9 L8 4 H13 L15 10" fill="#a0a09a" stroke="#888" />{c && <rect x="5" y="2" width="9" height="7" fill={c} />}</svg>
);

const MENU = [["Datei", 48], ["Bearbeiten", 79], ["Ansicht", 62], ["Dokument", 79], ["Anmerkungen", 100], ["Werkzeuge", 80], ["Fenster", 61], ["Hilfe", 40]];

function Toolbar() {
  return (
    <PdfTools>
      <Tool $w={18} $gap={16} aria-label="Öffnen"><svg width="17" height="18" viewBox="0 0 17 18"><path d="M1 3 L6 6 L14 4 V14 L6 18 L2 14Z" fill="#e8c619" /><path d="M1 3 L4 1 L6 6Z" fill="#5db338" /></svg></Tool>
      <OpenLabel>Öffnen...</OpenLabel>
      <Tool $w={10} $gap={4} aria-label="Mehr"><Caret /></Tool>
      <Tool $gap={9} $dim aria-label="Speichern"><Save size={19} fill="#6d7f95" color="#f4f4f4" /></Tool>
      <Tool $gap={8} aria-label="Drucken"><Printer size={16} color="#888" fill="#b5b5b5" /></Tool>
      <Tool $gap={5} aria-label="Senden"><svg width="20" height="20" viewBox="0 0 20 20"><path d="M5 5 L14 1 L18 12 L9 17Z" fill="#d9e4ef" stroke="#9fb2c4" /><path d="M3 10 Q8 8 11 12 V7 L17 14 L11 19 V16 Q6 15 3 18Z" fill="#7bab9d" /></svg></Tool>
      <Tool $w={10} $gap={6} aria-label="Mehr"><Caret /></Tool>
      <Tool $gap={9} aria-label="Scannen"><svg width="16" height="20" viewBox="0 0 16 20"><path d="M2 1 Q14 3 13 11 T6 19 Q9 12 2 1Z" fill="#2d6fc0" /><path d="M2 8 L8 12 L3 18Z" fill="#6ab04a" /></svg></Tool>
      <Tool $gap={9} aria-label="OCR"><svg width="20" height="20" viewBox="0 0 20 20"><path d="M3 1 H17 V10 H3Z" fill="#f6e9cd" /><text x="10" y="18" fontSize="9" fontWeight="700" textAnchor="middle" fontFamily="Roboto" fill="#222">OCR</text></svg></Tool>
      <Tool $gap={10} aria-label="Export"><Ball c="#54ad2c" d="M9 13 V5 M5 8 H12" /></Tool>
      <Tool $gap={8} $dim aria-label="Anhang"><Sheet tint="#c6d4bb" /></Tool>
      <Tool $gap={15} $dim aria-label="Rückgängig"><svg width="18" height="14" viewBox="0 0 18 14"><path d="M1 7 L8 2 V5 H16 V10 H8 V12Z" fill="#9fbbe0" /></svg></Tool>
      <Tool $w={10} $dim aria-label="Mehr"><Caret /></Tool>
      <Tool $gap={5} $dim aria-label="Wiederholen"><svg width="18" height="14" viewBox="0 0 18 14"><path d="M17 7 L10 2 V5 H2 V10 H10 V12Z" fill="#9fbbe0" /></svg></Tool>
      <Tool $w={10} $gap={5} $dim aria-label="Mehr"><Caret /></Tool>
      <Tool $w={10} $gap={1} $low aria-label="Mehr"><Caret /></Tool>
      <Tool $gap={16} aria-label="Links drehen"><Sheets d="M9 16 A5 5 0 0 1 5 6" c="#7cbc8c" /></Tool>
      <Tool $gap={7} aria-label="Rechts drehen"><Sheets d="M3 5 A6 6 0 0 1 13 13" c="#6fb98c" /></Tool>
      <Tool $w={10} $gap={3} $low aria-label="Mehr"><Caret /></Tool>
      <Tool $w={24} $gap={14} $on aria-label="Hand"><Hand size={19} fill="#fff" color="#a08a4a" strokeWidth={1.500} /></Tool>
      <Tool $gap={6} aria-label="Schnappschuss"><svg width="18" height="18" viewBox="0 0 18 18"><rect x="1" y="1" width="15" height="15" fill="#a3a2ac" stroke="#83828c" /><rect x="5" y="5" width="7" height="7" fill="#6d6d78" /></svg></Tool>
      <Tool $gap={4} aria-label="Auswahl"><svg width="19" height="19" viewBox="0 0 19 19"><path d="M1 2 H13 M1 6 H13 M1 10 H9 M3 1 V12 M10 1 V10" stroke="#8e8ea3" strokeWidth="1.500" /><path d="M9 7 L17 13 L13 14 L11 18Z" fill="#222" /></svg></Tool>
      <Tool $w={10} $gap={5} $low aria-label="Mehr"><Caret /></Tool>
      <Tool $gap={15} aria-label="Vergrößern"><svg width="20" height="20" viewBox="0 0 20 20"><path d="M11 12 L17 18" stroke="#e0a050" strokeWidth="3" /><circle cx="8" cy="8" r="6" fill="#c5dfe3" stroke="#7f9aa0" strokeWidth="1.500" /><path d="M5 8 H11 M8 5 V11" stroke="#3c8f5b" strokeWidth="2" /></svg></Tool>
      <Tool $w={10} $gap={12} aria-label="Mehr"><Caret /></Tool>
      <Tool $gap={8} aria-label="Originalgröße"><Sheet><text x="8" y="14" fontSize="7" textAnchor="middle" fontFamily="Roboto" fill="#3868b0">1:1</text></Sheet></Tool>
      <Tool $gap={7} aria-label="Ganze Seite"><Sheet><path d="M8 5 L12 10 L8 15 L4 10Z" fill="none" stroke="#4f7cc0" strokeWidth="1.500" /></Sheet></Tool>
      <Tool $gap={6} aria-label="Seitenbreite"><Sheet tint="#f0f0ee"><path d="M7 8 L4 11 L7 14 M10 8 L13 11 L10 14" fill="none" stroke="#777" /></Sheet></Tool>
      <ZoomSelect aria-label="Zoom"><option>150%</option></ZoomSelect>
      <Tool $w={10} $gap={4} aria-label="Mehr"><Caret /></Tool>
      <Tool $gap={5} aria-label="Kleiner"><Ball c="#3f9a2d" d="M5 9 H13" /></Tool>
      <ZoomRange type="range" aria-label="Zoomstufe" defaultValue="50" />
      <Tool aria-label="Größer"><Ball c="#55a92c" d="M5 9 H13 M9 5 V13" /></Tool>
      <Tool $w={10} $gap={4} $low aria-label="Mehr"><Caret /></Tool>
      <Tool $gap={15} aria-label="Suchen"><Binoculars /></Tool>
      <Tool $gap={11} aria-label="Acrobat"><svg width="20" height="18" viewBox="0 0 20 18"><ellipse cx="10" cy="9" rx="9" ry="7" fill="#cf2a35" /><path d="M5 12 L9 5 L11 12 L15 5" stroke="#fff" fill="none" strokeWidth="1.500" /></svg></Tool>
      <Tool $w={10} $gap={2} aria-label="Mehr"><Caret /></Tool>
      <FindInput aria-label="Suchbegriff" />
      <Tool $w={10} $gap={3} aria-label="Mehr"><Caret /></Tool>
      <Tool $gap={4} aria-label="Zurück suchen"><Binoculars c="#e8641c" /></Tool>
      <Tool $gap={8} aria-label="Weiter suchen"><Binoculars c="#7cb83c" /></Tool>
      <Tool $gap={12} aria-label="Suchoptionen"><svg width="20" height="20" viewBox="0 0 20 20"><path d="M1 3 H7 M1 6 H5" stroke="#888" /><path d="M9 18 L16 5 L13 17Z" fill="#c8cdd4" stroke="#7b8590" /></svg></Tool>
      <Tool $w={10} $gap={3} aria-label="Mehr"><Caret /></Tool>
      <Tool $w={10} $gap={2} $low aria-label="Mehr"><Caret /></Tool>
    </PdfTools>
  );
}

/* ---------- handwritten sheet ---------- */

const Ink = styled.text`
  font-family: Lato, sans-serif;
  font-style: italic;
  font-size: ${(p) => p.$s || 19}px;
  fill: #1c1a38;
`;
const Strokes = styled.g`
  fill: none;
  stroke: #1c1a38;
  stroke-width: 2;
  stroke-linecap: round;
  stroke-linejoin: round;
`;

const INK = [
  [1141, 376, 29, "3.2"], [1211, 377, 27, "Kollisionsvermeidung"],
  [1254, 465, 28, "F"], [1271, 470, 17, "ges"], [1302, 464, 18, "="], [1327, 435, 16, "359"], [1327, 476, 16, "i=0"],
  [1374, 463, 26, "F"], [1386, 472, 15, "i"],
  [1460, 438, 22, "F"], [1473, 441, 16, "ges"], [1502, 437, 18, "="], [1525, 436, 19, "ges."], [1566, 437, 22, "Kraft"],
  [1636, 437, 23, "frontal auf den"], [1799, 437, 19, "Roboters"], [1631, 409, 19, "in Fahrtrichtung des"],
  [1462, 465, 20, "R"], [1474, 468, 14, "i"], [1490, 465, 18, "="], [1509, 465, 19, "Range"], [1571, 465, 20, "aus"], [1624, 465, 20, "am"],
  [1662, 465, 22, "Winkel"], [1742, 465, 20, "i"],
  [1367, 538, 22, "-"], [1380, 538, 24, "cos"], [1441, 527, 15, "i"], [1434, 553, 16, "360"], [1464, 538, 18, "·"], [1471, 539, 22, "2π"],
  [1515, 538, 20, "·"], [1530, 538, 22, "0,7-R"], [1588, 541, 15, "i"],
  [1672, 537, 22, "R"], [1687, 540, 15, "i"], [1701, 537, 22, "<"], [1718, 537, 23, "0,7"],
  [1374, 604, 28, "0"], [1678, 607, 25, "sonst"],
  [1298, 580, 26, "F"], [1312, 586, 15, "i"], [1324, 580, 20, "="],
  [1241, 670, 22, "v"], [1254, 676, 13, "Lin"], [1274, 672, 20, "="], [1297, 673, 20, "min"], [1362, 671, 24, "F"], [1376, 674, 18, "ges"],
  [1412, 671, 20, ":"], [1421, 671, 24, "50"], [1455, 671, 24, "+"], [1473, 671, 25, "0,4"], [1531, 671, 24, ","], [1544, 671, 25, "0,4"],
  [1614, 671, 26, "⇒"], [1646, 672, 19, "Roboter"], [1715, 672, 23, "wird"], [1770, 672, 21, "nicht"], [1828, 672, 20, "schneller"], [1908, 672, 20, "als"], [1938, 672, 24, "0,4"],
  [1673, 705, 20, "„"], [1683, 702, 23, "verliert"], [1767, 702, 21, "nicht"], [1817, 702, 22, "den"], [1860, 702, 22, "Halt"], [1914, 692, 20, "“"],
  [1236, 760, 28, "0,7"], [1281, 760, 22, "="], [1320, 759, 25, "Abstand"], [1426, 759, 23, "zur"], [1472, 759, 23, "Wand,"], [1535, 759, 24, "ab"], [1573, 759, 23, "dem"],
  [1630, 760, 24, "korrigiert"], [1724, 761, 29, "wird"],
  [1271, 818, 26, "S"], [1289, 823, 16, "ges"], [1317, 818, 20, "="], [1341, 818, 21, "gesamte"], [1423, 818, 25, "seitliche"], [1525, 818, 25, "Kraft"], [1588, 818, 25, "auf"], [1636, 818, 20, "Roboter"],
  [1265, 903, 24, "S"], [1279, 908, 16, "ges"], [1306, 903, 20, "="], [1321, 877, 15, "359"], [1317, 915, 15, "i=0"], [1386, 904, 24, "S"], [1402, 910, 14, "i"],
  [1363, 989, 22, "-"], [1376, 989, 24, "sin"], [1424, 980, 21, "360"], [1437, 998, 15, "i"], [1461, 988, 20, "·"], [1470, 989, 23, "2π"], [1523, 989, 22, "·"], [1545, 989, 23, "0,7-R"], [1607, 992, 15, "i"],
  [1697, 993, 22, "R"], [1712, 996, 15, "i"], [1724, 993, 20, "<"], [1737, 993, 23, "0,7"], [1695, 1053, 27, "sonst"],
  [1294, 1022, 24, "S"], [1308, 1027, 15, "i"], [1320, 1022, 20, "="], [1374, 1050, 28, "0"],
  [1302, 1095, 20, "S"], [1316, 1098, 13, "i"], [1300, 1118, 17, "25"], [1246, 1120, 17, "ang"], [1232, 1112, 18, "V"],
  [1233, 1200, 24, "v"], [1246, 1208, 18, "ang"], [1278, 1196, 20, "="],
  [1336, 1165, 20, "S"], [1348, 1168, 13, "i"], [1335, 1186, 20, "25"], [1336, 1221, 20, "S"], [1348, 1224, 13, "i"], [1327, 1248, 18, "12,5"],
  [1457, 1181, 25, "sonst"], [1434, 1240, 22, "v"], [1446, 1244, 13, "Lin"], [1468, 1240, 20, "<"], [1482, 1240, 24, "0,2"], [1522, 1240, 20, "∧"],
  [1545, 1228, 19, "S"], [1556, 1231, 12, "i"], [1541, 1252, 16, "25"], [1566, 1240, 20, "<"], [1580, 1240, 25, "0,1"],
];

const H_LINES = Array.from({ length: 31 }, (_, i) => 345 + i * 29.4);
const V_LINES = [939, 968, 998, 1027, 1056, ...Array.from({ length: 37 }, (_, i) => 1085 + i * 29.4)];

function HandwrittenPage() {
  return (
    <svg width="100%" height="100%" viewBox="916 327 1236 927" preserveAspectRatio="xMidYMin slice">
      <g stroke="#5b5b5f" strokeWidth="1.400">
        {H_LINES.map((y) => <path key={y} d={`M916 ${y} L1085 ${y} L2144 ${y + 3}`} fill="none" />)}
        {V_LINES.map((x) => <path key={x} d={`M${x} 328 V1254`} />)}
        <path d="M918 328 H2148" stroke="#222" />
      </g>
      <path d="M917 328 V1254" stroke="#333" strokeWidth="3" />
      <path d="M1085 328 V1254 M1995.500 328 V1254" stroke="#0c0c12" strokeWidth="3" />
      <rect x="2062" y="414" width="38" height="34" fill="#fff" />
      <rect x="2062" y="880" width="38" height="34" fill="#fff" />
      <path d="M2066 439 Q2070 447 2080 447 T2093 440 M2066 907 Q2070 915 2080 915 T2093 908" fill="none" stroke="#666" strokeWidth="1.500" strokeDasharray="8 3" />
      {INK.map(([x, y, s, t], i) => <Ink key={i} x={x} y={y} $s={s}>{t}</Ink>)}
      <Strokes>
        <path d="M1252 441 H1277 M1372 442 H1397 M1460 413 H1479 M1298 560 H1317 M1363 652 H1381" />
        <path d="M1358 444 V441 H1327 L1341 450 L1328 460 H1360" />
        <path d="M1352 885 V882 H1322 L1338 890 L1324 900 H1352" />
        <path d="M1379 508 Q1357 500 1356 530 T1355 560 Q1354 570 1346 571 Q1354 572 1354 585 L1354 600 Q1354 613 1364 614" />
        <path d="M1371 957 Q1354 950 1352 975 L1350 1005 Q1350 1013 1342 1015 Q1350 1017 1349 1030 L1347 1055 Q1347 1063 1358 1063" />
        <path d="M1337 1142 Q1321 1140 1320 1155 L1320 1175 Q1320 1183 1312 1185 Q1318 1187 1317 1200 L1316 1254" />
        <path d="M1430 515 Q1411 538 1429 559 M1499 513 Q1515 536 1500 559 M1432 534 L1462 532 M1530 520 Q1516 535 1526 545 M1598 519 Q1610 531 1598 541" />
        <path d="M1354 649 Q1341 662 1354 676 M1588 648 Q1601 662 1589 674" />
        <path d="M1421 962 Q1405 980 1418 998 M1508 965 Q1520 978 1507 993 M1420 981 L1460 981 M1542 966 Q1528 981 1540 996 M1617 967 Q1631 981 1617 995" />
        <path d="M1332 1170 H1362 M1332 1227 H1358 M1541 1236 H1562" />
        <path d="M1662 688 H1680 M1674 682 L1681 688 L1673 693" />
        <path d="M1517 648 L1526 649 L1521 656 L1527 670" strokeWidth="3" />
        <path d="M1282 745 L1295 736 L1292 745" strokeWidth="3" />
        <path d="M1360 892 L1378 890 M1366 892 L1364 900 M1373 891 V901 M1370 893 L1378 900" strokeWidth="4" />
        <path d="M1635 431 L1787 433 M1571 460 L1608 458 M1608 463 Q1608 450 1617 446" strokeWidth="3" />
        <path d="M1230 1098 V1114 M1231 1103 Q1250 1094 1280 1096 L1320 1102 M1231 1108 L1265 1101 L1320 1106 M1234 1114 L1321 1116 M1320 1104 V1119" strokeWidth="3" />
      </Strokes>
    </svg>
  );
}

const WIN_APPS = [
  ["Start", <svg width="18" height="18" viewBox="0 0 18 18"><path d="M0 3 L8 2 V8.500 H0Z M9 2 L18 0 V8.500 H9Z M0 9.500 H8 V16 L0 15Z M9 9.500 H18 V18 L9 16Z" fill="#fff" /></svg>],
  ["Taskansicht", <svg width="18" height="18" viewBox="0 0 18 18"><path d="M2 1 V4 H11 V1 M2 17 V14 H11 V17 M2 6 H11 V12 H2Z M15 1 V17 M14 5 H17" fill="none" stroke="#ddd" strokeWidth="1.500" /></svg>],
  ["Outlook", <svg width="24" height="24" viewBox="0 0 24 24"><rect x="7" y="2" width="17" height="20" rx="2" fill="#1a74c4" /><path d="M10 12 L24 22 V8Z" fill="#41a5ee" /><rect y="6" width="13" height="13" rx="1" fill="#0f5aa5" /><circle cx="6.500" cy="12.500" r="3.500" fill="none" stroke="#fff" strokeWidth="2" /></svg>, true],
  ["Chrome", <svg width="24" height="24" viewBox="0 0 24 24"><circle cx="12" cy="12" r="11" fill="#4caf50" /><path d="M12 12 L2.500 6.500 A11 11 0 0 1 22 7Z" fill="#e5493a" /><path d="M12 12 L22 7 A11 11 0 0 1 12 23Z" fill="#fbc116" /><circle cx="12" cy="12" r="5.500" fill="#fff" /><circle cx="12" cy="12" r="4.300" fill="#3f7fe8" /></svg>, true, true],
  ["Spotify", <svg width="24" height="24" viewBox="0 0 24 24"><circle cx="12" cy="12" r="11.500" fill="#1ed760" /><path d="M5 8 Q12 6 19 9.500 M6 12 Q12 10.500 17.500 13.500 M7 16 Q12 14.500 16 17" fill="none" stroke="#1f1e1e" strokeWidth="2" /></svg>, true],
  ["Slack", <svg width="24" height="24" viewBox="0 0 24 24"><circle cx="12" cy="12" r="11.500" fill="#fff" /><g strokeWidth="3" strokeLinecap="round"><path d="M10 6 V10" stroke="#36c5f0" /><path d="M14 10 H18" stroke="#2eb67d" /><path d="M14 14 V18" stroke="#ecb22e" /><path d="M6 14 H10" stroke="#e01e5a" /><path d="M6 10 H7" stroke="#36c5f0" /><path d="M14 6 V6.500" stroke="#2eb67d" /></g></svg>, true],
  ["Explorer", <svg width="24" height="22" viewBox="0 0 24 22"><path d="M1 2 H9 L11 4 H23 V20 H1Z" fill="#fbc94a" /><path d="M4 12 H20 V20 H16 V16 H8 V20 H4Z" fill="#3b8fd8" /></svg>, true],
  ["Editor", <svg width="22" height="24" viewBox="0 0 22 24"><rect x="2" y="1" width="17" height="22" fill="#d5dee8" /><path d="M5 6 H16 M5 10 H16 M5 14 H16" stroke="#b3c2d2" strokeWidth="2" /><rect x="2" y="18" width="17" height="5" fill="#44607c" /></svg>, true],
  ["PDF-XChange", <svg width="24" height="24" viewBox="0 0 24 24"><rect width="24" height="24" rx="1" fill="#d7e6f4" /><path d="M2 3 H11 V13 H2Z" fill="#3a76bd" /><path d="M6 14 L18 3 L21 9 L10 17Z" fill="#6b9dd0" /><rect x="9" y="16" width="15" height="7" fill="#d93a2b" /></svg>, true],
];

function SharedScreen() {
  return (
    <Share>
      <PdfTitle>
        <svg width="16" height="17" viewBox="0 0 16 17"><rect width="15" height="16" fill="#8aa6c6" /><rect y="2" width="8" height="6" fill="#4471a5" /><rect x="5" y="11" width="10" height="5" fill="#cf5648" /></svg>
        <span>3_2_Kollisionsvermeidung - PDF-XChange Viewer</span>
        <PdfTitleButtons>
          <PlainButton aria-label="Minimieren"><svg width="10" height="10"><path d="M1 7 H9" stroke="#999" /></svg></PlainButton>
          <PlainButton aria-label="Wiederherstellen"><svg width="10" height="10"><path d="M1.500 3.500 H7.500 V9 H1.500Z M3 1.500 H9.500 V7" stroke="#999" fill="none" /></svg></PlainButton>
          <PlainButton aria-label="Schließen"><X size={12} strokeWidth={1} /></PlainButton>
        </PdfTitleButtons>
      </PdfTitle>
      <PdfTop>
        <div>
          <PdfMenu>{MENU.map(([m, w]) => <MenuButton key={m} $w={w}>{m}</MenuButton>)}</PdfMenu>
          <Toolbar />
        </div>
        <Download href="#">
          <svg width="24" height="24" viewBox="0 0 24 24"><circle cx="12" cy="12" r="10" fill="#dfe8ef" stroke="#6f7d88" strokeWidth="3" /><path d="M9 18 V9 L11 8 V13 L17 14 V20 H10Z" fill="#fff" stroke="#333" /></svg>
          <span>Download PDF<br />Creation Tools</span>
        </Download>
      </PdfTop>
      <DocTabs>
        <DocTab><a href="#">3_2_Kollisionsvermeidung</a><TabClose aria-label="Tab schließen"><X size={9} /></TabClose></DocTab>
        <RedClose aria-label="Dokument schließen" $w={14} $h={14} $c="#b33"><X size={10} strokeWidth={3} /></RedClose>
      </DocTabs>
      <Viewport>
        <Margin />
        <Page><HandwrittenPage /></Page>
        <Margin $right />
        <VScroll>
          <svg width="10" height="8"><path d="M1 7 L5 2 L9 7" fill="none" stroke="#444" strokeWidth="2" /></svg>
          <VThumb />
          <VEnd><svg width="10" height="8"><path d="M1 1 L5 6 L9 1" fill="none" stroke="#444" strokeWidth="2" /></svg></VEnd>
        </VScroll>
      </Viewport>
      <Status>21.03 x 29.67 cm</Status>
      <PdfNav>
        <NavGroup>
          <svg width="13" height="17" viewBox="0 0 13 17"><path d="M1 2 L4 16" stroke="#8f8c3a" strokeWidth="2" /><path d="M2 2 L12 1 L10 9 L4 10Z" fill="#e6dc1d" /></svg>
          <MenuButton $w={74}>Einstellungen</MenuButton><Caret />
        </NavGroup>
        <NavGroup $gap={12}>
          <Tool $w={14} $dim aria-label="Erste Seite"><svg width="12" height="14"><path d="M1 0 H4 V14 H1Z M12 0 V14 L5 7Z" fill="#7d94bb" /></svg></Tool>
          <Tool $w={14} $dim aria-label="Vorige Seite"><svg width="12" height="14"><path d="M10 0 V14 L2 7Z" fill="#7d94bb" /></svg></Tool>
          <PageInput aria-label="Seite" defaultValue="1" />
          <span>von 1</span>
          <Tool $w={14} $gap={4} $dim aria-label="Nächste Seite"><svg width="12" height="14"><path d="M2 0 V14 L10 7Z" fill="#7d94bb" /></svg></Tool>
          <Tool $w={14} $dim aria-label="Letzte Seite"><svg width="12" height="14"><path d="M8 0 H11 V14 H8Z M0 0 V14 L7 7Z" fill="#7d94bb" /></svg></Tool>
          <Tool $w={18} aria-label="Zurück"><Ball c="#6aae2b" d="M13 9 H6 M9 5 L5 9 L9 13" /></Tool>
          <Tool $w={18} $dim aria-label="Vor"><Ball c="#c8cdc4" d="M5 9 H12" /></Tool>
        </NavGroup>
        <NavGroup $end $gap={4}>
          <Tool $w={22} aria-label="Einzelseite"><Sheet tint="#fbfbfb" /></Tool>
          <Tool $w={24} $on aria-label="Fortlaufend"><svg width="16" height="20"><path d="M2 0 V7 H14 V0 M2 20 V11 H14 V20" fill="#fff" stroke="#777" /></svg></Tool>
          <Tool $w={22} aria-label="Zwei Seiten"><svg width="18" height="16"><path d="M1 14 H8 V4 M10 4 V14 H17 V2" fill="none" stroke="#999" strokeWidth="1.500" /></svg></Tool>
          <Tool $w={22} aria-label="Zwei Seiten fortlaufend"><svg width="18" height="18"><path d="M2 7 H16 M9 1 V7 M3 10 H8 V16 H3Z M10 10 H15 V16 H10Z" fill="none" stroke="#999" strokeWidth="1.500" /></svg></Tool>
          <Tool $w={28} $gap={8} aria-label="Sprache"><svg width="18" height="18"><path d="M1 1 L11 5 L16 17 L8 14Z" fill="#e8962e" /><path d="M2 2 L6 10" stroke="#d9532c" strokeWidth="3" /></svg></Tool>
          <Caret />
        </NavGroup>
      </PdfNav>
      <WinBar>
        {WIN_APPS.map(([name, icon, run, on]) => <WinApp key={name} aria-label={name} $run={run} $on={on}>{icon}</WinApp>)}
        <WinClock><span>16:12</span><span>13.05.2020</span></WinClock>
      </WinBar>
    </Share>
  );
}

/* ---------- desktop taskbar ---------- */

const Taskbar = styled.footer`
  position: relative;
  display: flex;
  align-items: center;
  height: 36px;
  padding-right: 9px;
  background: #31363b;
  color: #eff0f1;
`;
const Launchers = styled.div`
  display: flex;
  padding-right: 3px;
`;
const TaskEntry = styled.button`
  display: flex;
  align-items: center;
  gap: 8px;
  align-self: stretch;
  width: 257px;
  padding: 0 6px 3px;
  border-top: 3px solid #2577c8;
  font-size: 13px;
  white-space: nowrap;
`;
const Tray = styled.div`
  display: flex;
  align-items: center;
  gap: 8px;
  margin-left: auto;
`;
const Clock = styled.time`
  display: flex;
  flex-direction: column;
  align-items: center;
  font-size: 17px;
  line-height: 17px;
  small { font-size: 13px; line-height: 15px; }
`;
const Tooltip = styled.div`
  position: absolute;
  left: 258px;
  bottom: 36px;
  display: flex;
  gap: 19px;
  width: 239px;
  height: 86px;
  padding: 18px 14px;
  background: #31363b;
  box-shadow: 0 0 6px #0009;
  z-index: 2;
`;
const TipText = styled.div`
  display: flex;
  flex-direction: column;
  gap: 8px;
  white-space: nowrap;
  strong { font-size: 19px; line-height: 27px; font-weight: 400; }
  span { font-size: 13px; line-height: 18px; color: #8f9396; }
`;
const Pointer = styled.svg`
  position: absolute;
  left: 381px;
  top: 20px;
  z-index: 3;
`;

const SpectacleIcon = ({ size = 32 }) => (
  <svg width={size} height={size} viewBox="0 0 32 32">
    <rect x="0" y="2" width="32" height="24" fill="#3a3f44" />
    <rect x="1" y="3" width="30" height="21" fill="#35a79f" />
    <path d="M1 16 L20 8 L31 24 H1Z" fill="#2e7f8c" />
    <path d="M31 3 V24 L15 13Z" fill="#fba62b" />
    <path d="M3 8 V5 H6 M26 5 H29 V8 M3 19 V22 H6 M26 22 H29 V19" fill="none" stroke="#fff" />
    <rect x="10" y="10" width="11" height="8" rx="1" fill="#fff" />
    <circle cx="17" cy="14" r="3" fill="#ef9a3c" />
    <path d="M10 28 H22" stroke="#dfe2e4" strokeWidth="2" />
  </svg>
);

const DARK = "#3f4549";
const LAUNCHERS = [
  ["Startmenü", <svg width="28" height="28" viewBox="0 0 28 28"><path d="M17 4 L25 11 L17 18" fill="none" stroke="#fff" strokeWidth="4" /><circle cx="8" cy="4" r="2" fill="#fff" /><circle cx="4" cy="14" r="2.500" fill="#fff" /><circle cx="11" cy="24" r="3" fill="#fff" /></svg>],
  ["Chromium", <Chromium size={29} />],
  ["Thunderbird", <svg width="28" height="28" viewBox="0 0 28 28"><circle cx="14" cy="14" r="13" fill="#1b57ad" /><path d="M1 14 Q8 7 20 13 Q22 22 13 26 Q4 24 1 14Z" fill="#ebe2d8" /><path d="M3 15 Q12 22 19 14" fill="none" stroke="#b9aea4" /><path d="M3 10 Q14 -2 25 8 Q30 18 18 27 Q26 14 14 10 Q8 8 3 10Z" fill="#2b72c8" /></svg>],
  ["Dateien", <svg width="30" height="28" viewBox="0 0 30 28"><path d="M0 1 H12 L14 4 H30 V27 H0Z" fill="#2d6fae" /><rect x="1" y="6" width="28" height="4" fill="#fff" /><path d="M0 10 H11 L14 8 H30 V27 H0Z" fill="#3d9be2" /></svg>],
  ["Telegram", <Fav kind="telegram" size={26} />],
  ["Gear", <svg width="28" height="28" viewBox="0 0 28 28"><circle cx="14" cy="14" r="11.500" fill="none" stroke="#c4cac8" strokeWidth="3" strokeDasharray="3 2" /><circle cx="14" cy="14" r="10" fill="#cdd3d1" /><circle cx="14" cy="14" r="8" fill="#1b9257" /><circle cx="15" cy="12" r="5" fill="#69d794" /><circle cx="12" cy="14" r="2" fill="#14603b" /></svg>],
  ["Konsole", <svg width="28" height="28" viewBox="0 0 28 28"><rect width="28" height="28" rx="1" fill={DARK} /><path d="M11 9 L17 14 L11 20" fill="none" stroke="#aab0b3" strokeWidth="1.500" /></svg>],
  ["Pakete", <svg width="28" height="28" viewBox="0 0 28 28"><path d="M3 0 H25 L28 6 V28 H0 V6Z" fill="#d8a36c" /><path d="M0 7 H28" stroke="#b98450" /><rect x="12" y="0" width="4" height="14" fill="#f3e6d6" /><rect x="2" y="22" width="5" height="4" fill="none" stroke="#6d4c2b" /></svg>],
  ["Einstellungen", <svg width="28" height="28" viewBox="0 0 28 28"><rect width="28" height="28" rx="1" fill="#272b2f" /><path d="M4 11 H24" stroke="#4fa8e0" strokeWidth="2" /><path d="M4 18 H24" stroke="#ddd" strokeWidth="2" /><circle cx="18" cy="11" r="2.500" fill="#fff" /><circle cx="10" cy="18" r="2.500" fill="#fff" /></svg>],
  ["Monitor", <svg width="28" height="28" viewBox="0 0 28 28"><rect width="28" height="28" rx="1" fill="#2e3a3c" /><path d="M0 18 Q5 7 11 14 T20 20 L28 15 V28 H0Z" fill="#4ea874" /></svg>],
  ["Spectacle", <SpectacleIcon size={32} />],
];

function DesktopTaskbar() {
  return (
    <Taskbar>
      <Launchers>
        {LAUNCHERS.map(([name, icon]) => <PlainButton key={name} aria-label={name} $w={36} $h={32}>{icon}</PlainButton>)}
      </Launchers>
      <TaskEntry><Chromium size={20} />heiCONF - Robotic Games Tutoriu...</TaskEntry>
      <Tray>
        <PlainButton aria-label="Updates"><svg width="18" height="20" viewBox="0 0 18 20"><circle cx="9" cy="9" r="7.500" fill="none" stroke="#eff0f1" /><path d="M9 14 V6 M6 9 L9 5 L12 9" stroke="#fff" strokeWidth="2" fill="none" /><circle cx="14" cy="15" r="3.500" fill="#ed1515" /></svg></PlainButton>
        <PlainButton aria-label="Pause"><svg width="18" height="18" viewBox="0 0 18 18"><circle cx="9" cy="9" r="7.500" fill="none" stroke="#eff0f1" /><path d="M7 6 V12 M11 6 V12" stroke="#fff" strokeWidth="1.500" /></svg></PlainButton>
        <PlainButton aria-label="USB"><svg width="12" height="18" viewBox="0 0 12 18"><path d="M3 1 H9 V8 H3Z" fill="#eff0f1" /><path d="M1.500 8.500 H10.500 V16.500 H1.500Z M4 13 H8" fill="none" stroke="#eff0f1" strokeWidth="1.500" /><path d="M5 3 V5 M7 3 V5" stroke="#31363b" /></svg></PlainButton>
        <PlainButton aria-label="Anzeige"><svg width="18" height="18" viewBox="0 0 18 18"><path d="M6 2 H17 V12 H6 M1 2 H5 V6 H1Z M3 6 V15 H7" fill="none" stroke="#eff0f1" strokeWidth="1.300" /><path d="M7 16 H15 M9 14 H13" stroke="#eff0f1" strokeWidth="2" /></svg></PlainButton>
        <PlainButton aria-label="Sperren"><svg width="14" height="18" viewBox="0 0 14 18"><rect x="1" y="8" width="12" height="9" fill="#eff0f1" /><path d="M3.500 8 V5 Q3.500 1.500 7 1.500 T10.500 5 V8" fill="none" stroke="#eff0f1" strokeWidth="1.500" /></svg></PlainButton>
        <PlainButton aria-label="Zwischenablage"><svg width="14" height="18" viewBox="0 0 14 18"><path d="M1 3 H13 V17 H1Z" fill="none" stroke="#eff0f1" strokeWidth="1.500" /><path d="M3 2 H11 V5 H3Z" fill="#eff0f1" /><path d="M3.500 8 H10 M3.500 11 H9 M3.500 14 H7" stroke="#eff0f1" strokeWidth="1.300" /></svg></PlainButton>
        <PlainButton aria-label="Lautstärke"><Volume2 size={18} fill="#eff0f1" strokeWidth={1.500} /></PlainButton>
        <PlainButton aria-label="Mehr"><svg width="14" height="9" viewBox="0 0 14 9"><path d="M7 0 L14 9 H0Z" fill="#fff" /></svg></PlainButton>
        <Clock>16:12<small>13.05.20</small></Clock>
        <svg width="32" height="28" viewBox="0 0 32 28"><rect width="32" height="28" fill="#3b9fa3" /><path d="M0 0 H32 L10 16Z" fill="#41cdb9" /><path d="M32 0 V28 L12 14Z" fill="#fba62b" /><path d="M0 24 L13 15 L24 24Z" fill="#38464c" /><rect y="24" width="32" height="4" fill="#c9d0d2" /></svg>
        <PlainButton aria-label="Leiste" $w={14}><svg width="13" height="11"><path d="M0 1 H13 M0 5.500 H13 M0 10 H13" stroke="#9a9da0" strokeWidth="1.500" /></svg></PlainButton>
      </Tray>
      <Tooltip role="tooltip">
        <SpectacleIcon size={32} />
        <TipText><strong>Spectacle</strong><span>Screenshot Capture Utility</span></TipText>
      </Tooltip>
      <Pointer width="14" height="18" viewBox="0 0 14 18"><path d="M1 0 L13 12 H8 L4 18 L1 17Z" fill="#31363b" stroke="#fff" /></Pointer>
    </Taskbar>
  );
}

export default function App() {
  return (
    <Desktop>
      <GlobalStyle />
      <BrowserChrome />
      <Conference>
        <Participants />
        <Chat />
        <Stage>
          <StageTop>
            <PlainButton aria-label="Teilnehmer" $w={18}><User size={17} strokeWidth={1.500} /></PlainButton>
            <StageTitle>Robotic Games Tutorium</StageTitle>
            <EndButton aria-label="Optionen"><EllipsisVertical size={18} strokeWidth={2.500} /></EndButton>
          </StageTop>
          <Talking><TalkMic><Mic size={11} strokeWidth={1.500} /></TalkMic>Baumgaertner, Jan</Talking>
          <ShareRow>
            <SharedScreen />
            <FullscreenButton aria-label="Vollbild"><Maximize2 size={14} /></FullscreenButton>
          </ShareRow>
          <Actions>
            <Round aria-label="Mikrofon"><MicOff size={20} strokeWidth={1.200} /></Round>
            <Round aria-label="Audio verlassen" $on><Phone size={19} strokeWidth={1.200} /></Round>
            <Round aria-label="Webcam"><VideoOff size={20} strokeWidth={1.200} /></Round>
          </Actions>
        </Stage>
      </Conference>
      <DesktopTaskbar />
    </Desktop>
  );
}
